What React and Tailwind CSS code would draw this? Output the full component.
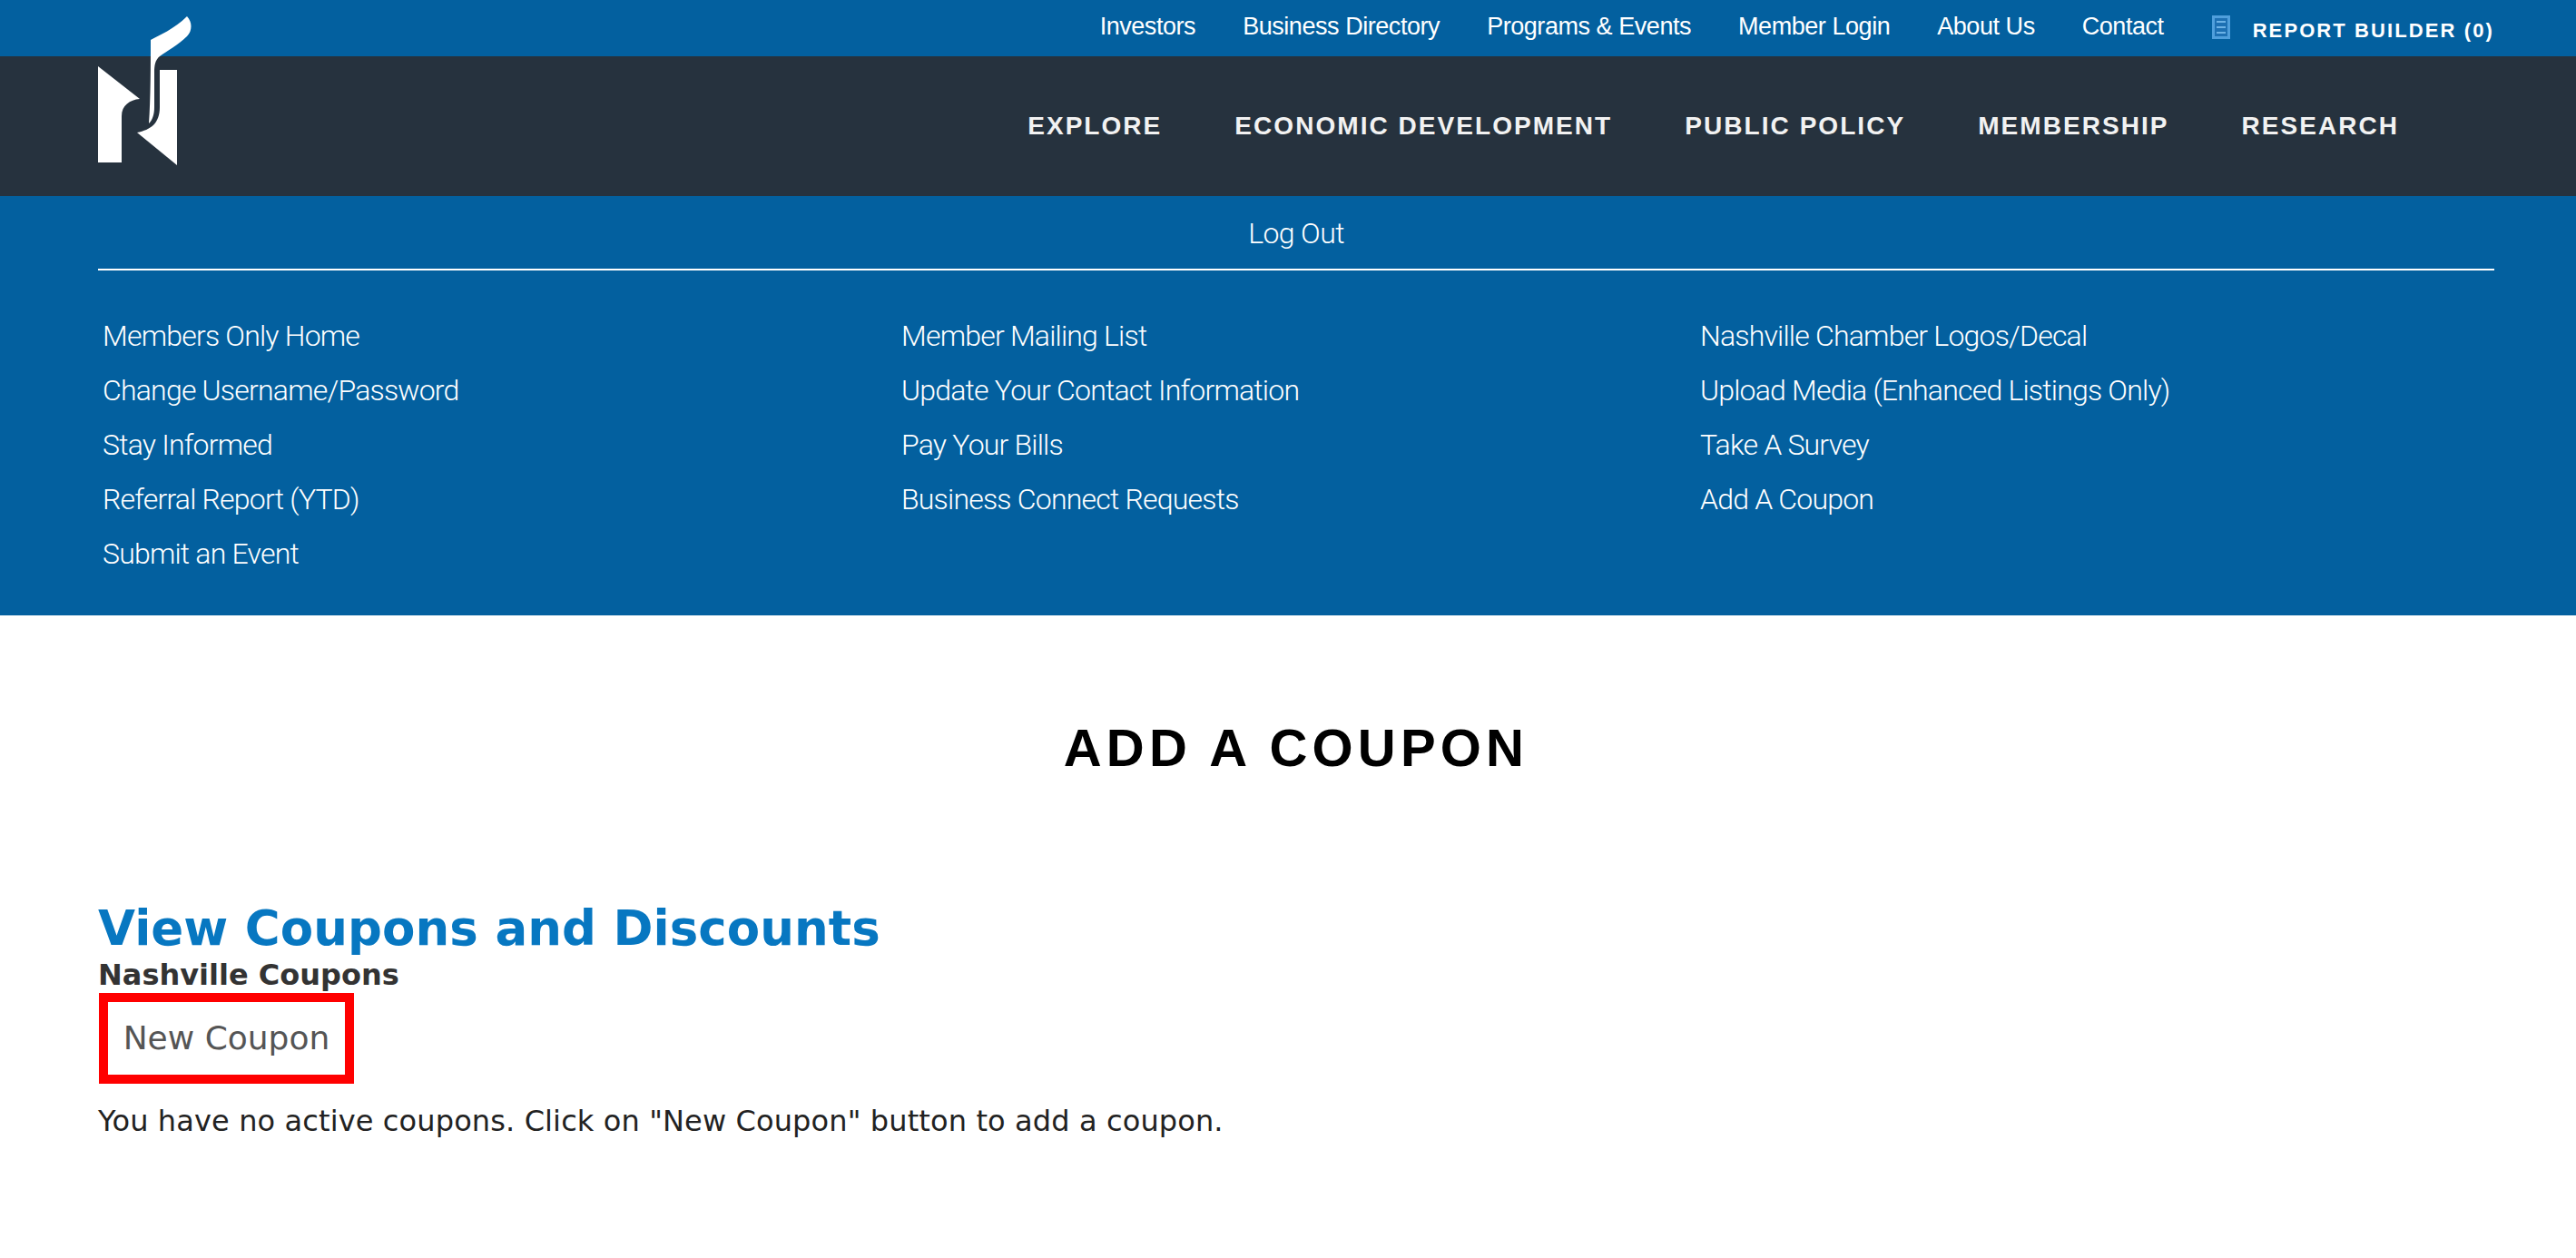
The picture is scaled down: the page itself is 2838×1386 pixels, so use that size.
const helv = "font-['Liberation_Sans',Arial,sans-serif]";

const topLinks = ["Investors", "Business Directory", "Programs & Events", "Member Login", "About Us", "Contact"];
const mainLinks = ["EXPLORE", "ECONOMIC DEVELOPMENT", "PUBLIC POLICY", "MEMBERSHIP", "RESEARCH"];
const columns = [
  ["Members Only Home", "Change Username/Password", "Stay Informed", "Referral Report (YTD)", "Submit an Event"],
  ["Member Mailing List", "Update Your Contact Information", "Pay Your Bills", "Business Connect Requests"],
  ["Nashville Chamber Logos/Decal", "Upload Media (Enhanced Listings Only)", "Take A Survey", "Add A Coupon"],
];

function Logo() {
  return (
    <svg className="absolute left-[108px] top-[18px]" width="106" height="166" viewBox="108 18 106 166" fill="#fff">
      <path d="M108 73 L154 109 C143 110 134 116 134 128 L134 179 L108 179 Z" />
      <path d="M195 77 L195 182 L151 146 C166 143 176 136 176 118 L176 77 Z" />
      <path d="M166 44 C175 39 192 32 206 18 C212 24 212 34 206 40 C196 50 184 56 176 62 C171 66 170 72 170 80 L170 118 C170 126 168 132 164 136 C166 110 166 70 166 44 Z" />
    </svg>
  );
}

function ReportIcon() {
  return (
    <svg width="20" height="26" viewBox="0 0 20 26" className="shrink-0 -translate-y-[1px]">
      <rect x="0" y="0" width="20" height="26" fill="#4f9fdc" />
      <rect x="3" y="3" width="14" height="20" fill="#1d70b3" />
      <rect x="5" y="6" width="10" height="2" fill="#6cb2e6" />
      <rect x="5" y="12" width="10" height="2" fill="#6cb2e6" />
      <rect x="5" y="18" width="10" height="2" fill="#6cb2e6" />
    </svg>
  );
}

export default function App() {
  return (
    <div className={`relative min-h-[1386px] bg-white ${helv}`}>
      <div className="h-[62px] bg-[#03609f] flex justify-end items-center pr-[90px] text-white">
        <div className="flex items-center gap-[52px] text-[27px] tracking-[-0.45px] -translate-y-[2px]">
          {topLinks.map((l) => <span key={l}>{l}</span>)}
        </div>
        <div className="flex items-center ml-[53px] gap-[25px]">
          <ReportIcon />
          <span className="font-bold text-[22px] tracking-[2.1px] translate-y-[2px]">REPORT BUILDER (0)</span>
        </div>
      </div>
      <div className="h-[154px] bg-[#26323e] flex justify-end items-center pr-[195px] text-[#f2f2f2]">
        <div className="flex gap-[80px] font-bold text-[28px] tracking-[2.05px]">
          {mainLinks.map((l) => <span key={l}>{l}</span>)}
        </div>
      </div>
      <Logo />
      <div className="h-[462px] bg-[#03609f] text-white pl-[108px] pr-[90px] pt-[18px] font-['Roboto',sans-serif] font-light">
        <div className="h-[59px] text-center text-[32px] tracking-[-0.6px] leading-[40px] pt-[3px] border-b-2 border-white box-content">Log Out</div>
        <div className="grid grid-cols-[880px_880px_1fr] pt-[42px] pl-[5px]">
          {columns.map((c, i) => (
            <div key={i} className="flex flex-col">
              {c.map((l) => <div key={l} className="h-[60px] leading-[60px] text-[32px] tracking-[-0.8px]">{l}</div>)}
            </div>
          ))}
        </div>
      </div>
      <h1 className="pl-[108px] pr-[90px] text-center font-bold text-[58px] tracking-[5.2px] text-black pt-[110px] leading-[72px]">ADD A COUPON</h1>
      <div className="px-[108px] pt-[132px] font-['DejaVu_Sans',Verdana,sans-serif]">
        <h2 className="font-bold text-[53px] tracking-[0.05px] leading-[62px] text-[#0777c1]">View Coupons and Discounts</h2>
        <div className="font-bold text-[32px] leading-[40px] text-[#333]">Nashville Coupons</div>
        <div className="ml-[1px] w-[281px] h-[100px] border-[10px] border-[#f00] flex items-center justify-center text-[36px] text-[#555] bg-white">New Coupon</div>
        <p className="mt-[19px] text-[32px] tracking-[0.125px] leading-[44px] text-[#222]">You have no active coupons. Click on "New Coupon" button to add a coupon.</p>
      </div>
    </div>
  );
}
